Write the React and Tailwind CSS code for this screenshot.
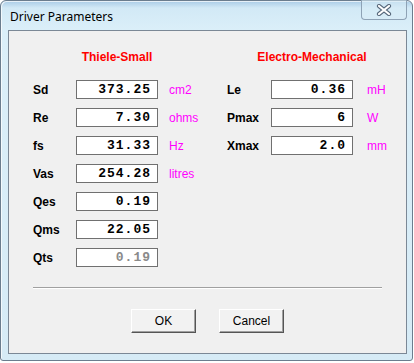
import React from "react";

const left = [
  { label: "Sd", value: "373.25", unit: "cm2" },
  { label: "Re", value: "7.30", unit: "ohms" },
  { label: "fs", value: "31.33", unit: "Hz" },
  { label: "Vas", value: "254.28", unit: "litres" },
  { label: "Qes", value: "0.19" },
  { label: "Qms", value: "22.05" },
  { label: "Qts", value: "0.19", disabled: true },
];

const right = [
  { label: "Le", value: "0.36", unit: "mH" },
  { label: "Pmax", value: "6", unit: "W" },
  { label: "Xmax", value: "2.0", unit: "mm" },
];

const sans = { fontFamily: '"Liberation Sans", Arial, sans-serif' };

function Row({ row, labelW, unitGap }) {
  return (
    <div className="flex h-[19px] items-center">
      <div className={`${labelW} text-[12px] font-bold text-black`}>{row.label}</div>
      <div className="flex h-[19px] w-[82px] items-center justify-end border border-[#707070] bg-white pr-[6px]">
        <span
          className={`text-[13px] font-bold leading-none tracking-[1px] ${row.disabled ? "text-[#8a8a8a]" : "text-black"}`}
          style={{ fontFamily: '"Liberation Mono", "Courier New", monospace' }}
        >
          {row.value}
        </span>
      </div>
      {row.unit && <div className={`${unitGap} text-[12px] text-[#ff00ff]`}>{row.unit}</div>}
    </div>
  );
}

function Column({ title, rows, labelW, headPad, unitGap, width }) {
  return (
    <div className={width}>
      <div className={`flex ${headPad}`}>
        <div className="flex w-[82px] justify-center whitespace-nowrap text-[12px] font-bold leading-[14px] text-[#ff0000]">
          {title}
        </div>
      </div>
      <div className="mt-[16px] flex flex-col gap-[9px]">
        {rows.map((r) => (
          <Row key={r.label} row={r} labelW={labelW} unitGap={unitGap} />
        ))}
      </div>
    </div>
  );
}

function WinButton({ children }) {
  return (
    <button
      className="h-[24px] w-[65px] border border-t-white border-l-white border-r-[#555] border-b-[#555] bg-[#f2f2f2] text-[12px] text-black shadow-[inset_-1px_-1px_0_#a0a0a0]"
      style={sans}
    >
      {children}
    </button>
  );
}

export default function App() {
  return (
    <div className="h-[363px] w-[414px] bg-white" style={sans}>
      <div className="flex h-[361px] w-[413px] flex-col rounded-t-[6px] rounded-b-[3px] border border-[#6b7d8e] bg-[linear-gradient(to_bottom,#a9cbe6_0px,#d2e9f6_7px,#dbeff9_30px,#d6ebf6_100%)] shadow-[inset_1px_1px_0_rgba(255,255,255,0.7)]">
        <div className="flex h-[29px] items-start justify-between pl-[9px] pr-[5px]">
          <div
            className="pt-[8px] text-[12px] leading-[16px] text-black"
            style={{ fontFamily: '"Noto Sans", "Segoe UI", sans-serif' }}
          >
            Driver Parameters
          </div>
          <div className="-mt-[1px] flex h-[20px] w-[46px] items-center justify-center rounded-b-[4px] border border-t-0 border-[#8ea2b5] bg-[#d9ecf7]/60">
            <svg width="16" height="12" viewBox="0 0 16 12">
              <path d="M3 2 L13 10 M13 2 L3 10" stroke="#56677a" strokeWidth="4.2" strokeLinecap="round" />
              <path d="M3 2 L13 10 M13 2 L3 10" stroke="#ffffff" strokeWidth="2.2" strokeLinecap="round" />
            </svg>
          </div>
        </div>
        <div className="flex flex-1 flex-col pb-[6px] pl-[7px] pr-[5px]">
          <div className="flex-1 border border-[#7b8896] bg-[#f0f0f0]">
            <div className="flex pl-[24px] pt-[19px]">
              <Column title="Thiele-Small" rows={left} labelW="w-[43px]" headPad="pl-[43px]" unitGap="ml-[11px]" width="w-[194px]" />
              <Column title="Electro-Mechanical" rows={right} labelW="w-[44px]" headPad="pl-[44px]" unitGap="ml-[14px]" width="" />
            </div>
            <div className="mx-[24px] mt-[20px] h-0 border-t border-b border-t-[#a0a0a0] border-b-white" />
            <div className="mt-[20px] flex justify-center gap-[23px]">
              <WinButton>OK</WinButton>
              <WinButton>Cancel</WinButton>
            </div>
          </div>
        </div>
      </div>
    </div>
  );
}
